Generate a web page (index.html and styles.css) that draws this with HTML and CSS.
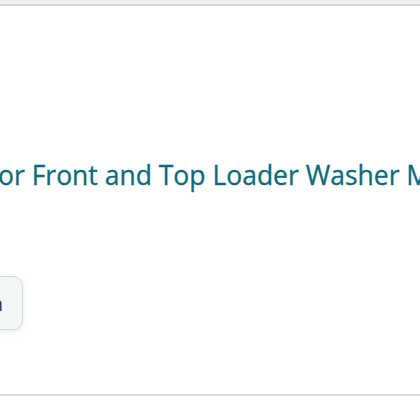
FILE: index.html
```html
<!DOCTYPE html>
<html>
<head>
<meta charset="utf-8">
<link rel="stylesheet" href="styles.css">
</head>
<body>
<div class="page">
  <div class="topbar"></div>
  <div class="content">
    <h2 class="title"><span class="lead"><span>Dryer Vent Kit f</span></span><span class="rest">or Front and Top Loader Washer Machines</span></h2>
    <div class="actions">
      <button class="btn">See more on Amazon</button>
    </div>
  </div>
  <div class="bottomline"></div>
</div>
</body>
</html>
```
FILE: styles.css
```css
html, body {
  margin: 0;
  padding: 0;
  background: #ffffff;
  width: 420px;
  height: 420px;
  overflow: hidden;
}
.page {
  width: 420px;
  height: 420px;
  display: flex;
  flex-direction: column;
  overflow: hidden;
  font-family: "Open Sans", "Noto Sans", sans-serif;
}
.topbar {
  height: 4px;
  background: #eef0f1;
  border-bottom: 2px solid #d5d9da;
  flex: none;
}
.content {
  height: 388px;
  flex: none;
  display: flex;
  flex-direction: column;
}
.title {
  margin: 150px 0 0 -2px;
  font-size: 26.5px;
  font-weight: 500;
  line-height: 38px;
  color: #0e6a7a;
  -webkit-text-stroke: 0.3px #0e6a7a;
  white-space: nowrap;
  display: flex;
}
.lead {
  flex: none;
  width: 0;
  min-width: 0;
  display: flex;
  justify-content: flex-end;
  visibility: hidden;
}
.rest {
  flex: none;
}
.actions {
  margin-top: 82px;
  display: flex;
  justify-content: flex-end;
  width: 240px;
  margin-left: -217px;
}
.btn {
  height: 54px;
  padding: 0 19px 0 14px;
  border: 1.5px solid #d5d9da;
  border-radius: 10px;
  background: #f4f7f8;
  box-shadow: 0 2px 5px rgba(213, 217, 217, 0.5);
  font-family: "Open Sans", "Noto Sans", sans-serif;
  font-size: 20px;
  color: #333333;
  white-space: nowrap;
}
.bottomline {
  height: 2px;
  background: #d9dddd;
  flex: none;
}
```
